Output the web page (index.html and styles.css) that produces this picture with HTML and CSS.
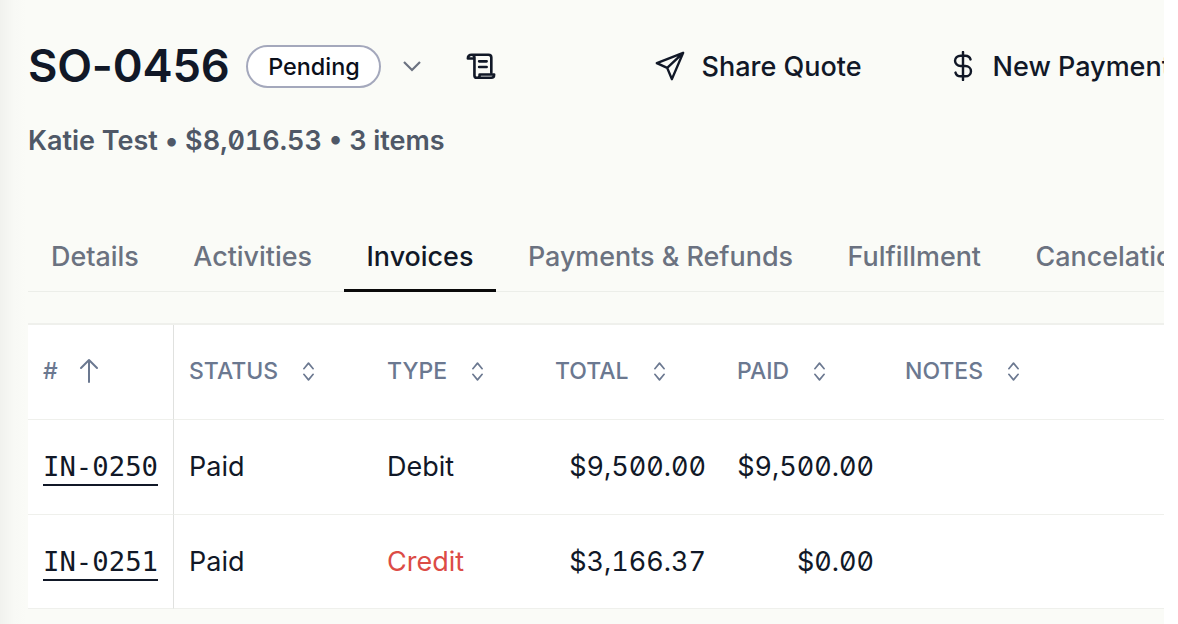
FILE: index.html
```html
<!DOCTYPE html>
<html lang="en">
<head>
<meta charset="utf-8">
<title>SO-0456</title>
<link rel="stylesheet" href="styles.css">
</head>
<body>
<main class="page">
  <header class="head">
    <h1 class="title">SO-0456</h1>
    <span class="pill">Pending</span>
    <svg class="chev" viewBox="0 0 20 12" aria-hidden="true"><path d="M2 2l8 8 8-8"/></svg>
    <svg class="scroll" viewBox="0 0 32 28" aria-hidden="true"><path d="M6 2h18c2 0 3 1 3 3v16M6 2C3.500 2 2 3.500 2 6h7V5C9 3.500 8 2 6 2ZM9 5v19c0 1.500 1 2.500 2.500 2.500H27c2 0 3-1.200 3-3.500H14.500v1c0 1.500-1 2.500-2.500 2.500M14 9h8M14 15h8"/></svg>
    <div class="actions">
      <button class="act act-share"><svg class="send" viewBox="0 0 32 32" aria-hidden="true"><path d="M30 2 2 13l11 5 5 12L30 2ZM30 2 13 18"/></svg>Share Quote</button>
      <button class="act act-pay"><svg class="dollar" viewBox="0 0 22 32" aria-hidden="true"><path d="M19 9c-.7-2.500-3-4-5.500-4h-5C5 5 2.500 7.500 2.500 10.500S5 16 8.500 16h5c3.500 0 6 2.500 6 5.500S17 27 13.500 27h-5c-2.500 0-4.800-1.500-5.500-4M11 1v30"/></svg>New Payment</button>
    </div>
  </header>
  <p class="sub">Katie Test • <span class="sub-num">$8,016.53</span> • 3 items</p>
  <nav class="tabs">
    <a class="tab">Details</a>
    <a class="tab">Activities</a>
    <a class="tab tab-on">Invoices</a>
    <a class="tab">Payments &amp; Refunds</a>
    <a class="tab">Fulfillment</a>
    <a class="tab">Cancelations</a>
  </nav>
  <table class="grid">
    <colgroup>
      <col class="c-id"><col class="c-status"><col class="c-type"><col class="c-total"><col class="c-paid"><col class="c-notes">
    </colgroup>
    <thead>
      <tr>
        <th class="first"><span class="th">#<svg class="up" viewBox="0 0 20 26" aria-hidden="true"><path d="M10 24V2M2 10l8-8 8 8"/></svg></span></th>
        <th><span class="th">STATUS<svg class="sort" viewBox="0 0 14 22" aria-hidden="true"><path d="M2 8l5-6 5 6M2 14l5 6 5-6"/></svg></span></th>
        <th><span class="th">TYPE<svg class="sort" viewBox="0 0 14 22" aria-hidden="true"><path d="M2 8l5-6 5 6M2 14l5 6 5-6"/></svg></span></th>
        <th><span class="th">TOTAL<svg class="sort" viewBox="0 0 14 22" aria-hidden="true"><path d="M2 8l5-6 5 6M2 14l5 6 5-6"/></svg></span></th>
        <th><span class="th">PAID<svg class="sort" viewBox="0 0 14 22" aria-hidden="true"><path d="M2 8l5-6 5 6M2 14l5 6 5-6"/></svg></span></th>
        <th><span class="th">NOTES<svg class="sort" viewBox="0 0 14 22" aria-hidden="true"><path d="M2 8l5-6 5 6M2 14l5 6 5-6"/></svg></span></th>
      </tr>
    </thead>
    <tbody>
      <tr>
        <td class="first"><a class="inv">IN-0250</a></td>
        <td>Paid</td><td>Debit</td>
        <td class="num">$9,500.00</td><td class="num">$9,500.00</td><td></td>
      </tr>
      <tr>
        <td class="first"><a class="inv">IN-0251</a></td>
        <td>Paid</td><td class="credit">Credit</td>
        <td class="num">$3,166.37</td><td class="num">$0.00</td><td></td>
      </tr>
    </tbody>
  </table>
</main>
</body>
</html>
```
FILE: styles.css
```css
* { box-sizing: border-box; }
html, body { margin: 0; height: 100%; background: #fff; }
body { width: 1178px; height: 624px; overflow: hidden; font-family: Inter, "Liberation Sans", sans-serif; color: #111827; }
.page {
  width: 1164px; height: 624px; overflow: hidden; padding: 36px 0 0 28px;
  background: linear-gradient(90deg, #f1f2ee 0, #f8f9f5 14px, #fafbf7 26px);
}
.head { display: flex; align-items: center; height: 60px; white-space: nowrap; }
.title { margin: 0; font-size: 45.300px; line-height: 60px; font-weight: 600; color: #111827; letter-spacing: -0.2px; }
.pill {
  margin-left: 17px; height: 43px; width: 135px; flex: none; display: flex; align-items: center; justify-content: center;
  border: 2px solid #a4a8bc; border-radius: 22px; background: #fff; font-size: 23.400px; font-weight: 500; color: #0b0f1a;
}
.chev { width: 20px; height: 12px; margin-left: 21px; flex: none; fill: none; stroke: #6b7280; stroke-width: 2.200; }
.scroll { width: 30px; height: 28px; margin-left: 44px; flex: none; fill: none; stroke: #111827; stroke-width: 2.800; stroke-linejoin: round; stroke-linecap: round; }
.actions { display: flex; align-items: center; margin-left: 159px; }
.act { display: flex; align-items: center; flex: none; padding: 0; border: 0; background: none; font: 500 27px Inter, "Liberation Sans", sans-serif; color: #111827; white-space: nowrap; }
.act-pay { margin-left: 90px; }
.send { width: 30px; height: 30px; margin-right: 16px; fill: none; stroke: #111827; stroke-width: 2.600; stroke-linejoin: round; stroke-linecap: round; }
.dollar { width: 22px; height: 30px; margin-right: 19px; fill: none; stroke: #111827; stroke-width: 2.600; stroke-linecap: round; }
.sub { margin: 30px 0 0; font-size: 27px; line-height: 30px; font-weight: 600; color: #4f5867; white-space: nowrap; }
.sub-num { font-variant-numeric: tabular-nums slashed-zero; font-feature-settings: "tnum", "zero"; }
.tabs { display: flex; gap: 8.500px; margin-top: 75px; height: 61px; border-bottom: 1.800px solid #eceee9; white-space: nowrap; }
.tab { padding: 0 23px; height: 61px; flex: none; line-height: 50px; font-size: 26.900px; font-weight: 500; color: #6b7280; }
.tab-on { color: #111827; border-bottom: 3.600px solid #0a0a0a; }
.grid { margin-top: 31px; width: 1136px; table-layout: fixed; border-collapse: separate; border-spacing: 0; background: #fff; border-top: 2px solid #eff0ec; }
.c-id { width: 146px; } .c-status { width: 198px; } .c-type { width: 168px; } .c-total { width: 182px; } .c-paid { width: 168px; }
th, td { padding: 0 16px 0 15px; text-align: left; border-bottom: 1.800px solid #eff0ec; font-size: 27px; white-space: nowrap; }
th { height: 95px; font-weight: 500; padding-bottom: 2px; }
td { height: 94.600px; color: #111827; font-weight: 400; }
.first { border-right: 1.800px solid #e0e1df; }
.th { display: flex; align-items: center; font-size: 23px; font-weight: 500; color: #6b7890; }
.sort { width: 13px; height: 21px; margin-left: 24px; fill: none; stroke: #6b7890; stroke-width: 1.800; stroke-linecap: round; stroke-linejoin: round; }
.up { width: 20px; height: 26px; margin-left: 21px; fill: none; stroke: #6b7890; stroke-width: 2; stroke-linecap: round; stroke-linejoin: round; }
.inv { font-family: "DejaVu Sans Mono", monospace; font-size: 27.300px; padding-bottom: 2px; border-bottom: 2px solid #111827; }
.num { font-variant-numeric: tabular-nums slashed-zero; font-feature-settings: "tnum", "zero"; text-align: right; }
.credit { color: #dc4c46; }
```
